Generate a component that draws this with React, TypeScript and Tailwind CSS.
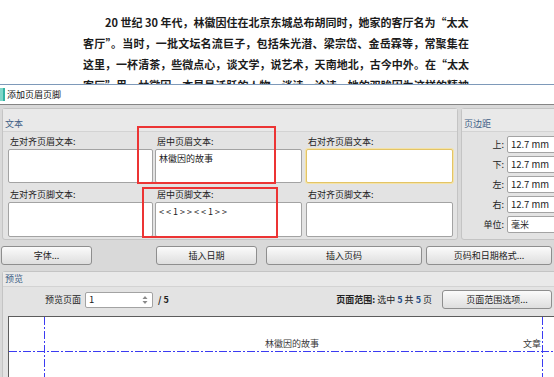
import { ReactNode } from "react";

const docLines = [
  { text: "20 世纪 30 年代，林徽因住在北京东城总布胡同时，她家的客厅名为“太太", indent: true },
  { text: "客厅”。当时，一批文坛名流巨子，包括朱光潜、梁宗岱、金岳霖等，常聚集在", indent: false },
  { text: "这里，一杯清茶，些微点心，谈文学，说艺术，天南地北，古今中外。在“太太", indent: false },
  { text: "客厅”里，林徽因，本是最活跃的人物，谈诗、论诗，她的双眸因为这样的精神", indent: false },
];

const margins = ["上:", "下:", "左:", "右:"];

function GroupHeader({ title, tall = true }: { title: string; tall?: boolean }) {
  return (
    <div
      className={
        tall
          ? "h-[23px] border-b border-[#d3d3d3] bg-[#e9e9e9] px-[2px] pt-[9px] text-[9px] leading-[12px] text-[#3f5f86]"
          : "h-[15px] border-b border-[#d3d3d3] bg-[#e9e9e9] px-[2px] pt-[1px] text-[9px] leading-[12px] text-[#3f5f86]"
      }
    >
      {title}
    </div>
  );
}

function Field({ children, focus = false, h }: { children?: ReactNode; focus?: boolean; h: string }) {
  return (
    <div
      className={`${h} rounded-[2px] border bg-white px-[3px] pt-[3px] text-[9px] leading-[12px] text-[#222] ${
        focus ? "border-[#e3c466] shadow-[0_0_0_1px_#f3e2a8]" : "border-[#a3a3a3]"
      }`}
    >
      {children}
    </div>
  );
}

function Btn({ children, className }: { children: ReactNode; className: string }) {
  return (
    <div
      className={`flex h-[19px] shrink-0 items-center justify-center rounded-[3px] border border-[#8e8e8e] bg-gradient-to-b from-[#fbfbfb] to-[#dedede] text-[9px] text-[#222] ${className}`}
    >
      {children}
    </div>
  );
}

function TextCol({
  className,
  top,
  bottom,
  focusTop = false,
  topText,
  bottomText,
}: {
  className: string;
  top: string;
  bottom: string;
  focusTop?: boolean;
  topText?: ReactNode;
  bottomText?: ReactNode;
}) {
  return (
    <div className={`shrink-0 ${className}`}>
      <div className="mt-[4px] h-[12px] pl-[2px] text-[9px] leading-[12px] text-[#222]">{top}</div>
      <div className="mt-[1px]">
        <Field h="h-[34px]" focus={focusTop}>
          {topText}
        </Field>
      </div>
      <div className="mt-[6px] h-[12px] pl-[2px] text-[9px] leading-[12px] text-[#222]">{bottom}</div>
      <div className="mt-[1px]">
        <Field h="h-[35px]">{bottomText}</Field>
      </div>
    </div>
  );
}

export default function App() {
  return (
    <div className="relative h-[377px] w-[554px] overflow-hidden bg-white font-['Noto_Sans_CJK_SC',sans-serif]">
      {/* document behind the dialog */}
      <div className="h-[84px] overflow-hidden pt-[12px] pl-[83px]">
        {docLines.map((l) => (
          <div
            key={l.text}
            className={`h-[21px] whitespace-nowrap text-justify text-[11px] leading-[21px] font-semibold text-[#1c1c1c] [text-align-last:justify] ${
              l.indent ? "ml-[22px] w-[363px]" : "w-[386px]"
            }`}
          >
            {l.text}
          </div>
        ))}
      </div>

      {/* title bar */}
      <div className="flex h-[21px] items-center border-t border-b border-t-[#7e99b9] border-b-[#858585] bg-white">
        <div className="h-[13px] w-[5px] border-r-2 border-[#35b2a2] bg-[#7fd6c8]" />
        <span className="ml-[2px] text-[9px] text-[#111]">添加页眉页脚</span>
      </div>

      {/* dialog body */}
      <div className="h-[300px] bg-[#d9d9d9] pt-[3px]">
        <div className="flex pl-[2px]">
          <div className="w-[456px] shrink-0 rounded-[3px] border border-[#c4c4c4] bg-[#e3e3e3] pb-[2px]">
            <GroupHeader title="文本" />
            <div className="flex pl-[5px]">
              <TextCol className="w-[145px]" top="左对齐页眉文本:" bottom="左对齐页脚文本:" />
              <TextCol
                className="ml-[2px] w-[147px]"
                top="居中页眉文本:"
                bottom="居中页脚文本:"
                topText="林徽因的故事"
                bottomText={<span className="tracking-[2px]">{"<<1>><<1>>"}</span>}
              />
              <TextCol
                className="ml-[4px] w-[147px]"
                top="右对齐页眉文本:"
                bottom="右对齐页脚文本:"
                focusTop
              />
            </div>
          </div>
          <div className="ml-[3px] w-[100px] shrink-0 rounded-[3px] border border-[#c4c4c4] bg-[#e3e3e3]">
            <GroupHeader title="页边距" />
            <div className="mt-[4px] flex flex-col gap-[3px]">
              {margins.map((m) => (
                <div key={m} className="flex h-[17px] items-center">
                  <span className="w-[48px] text-right text-[9px] text-[#222]">{m}</span>
                  <div className="ml-[3px] flex h-[17px] w-[60px] items-center rounded-[2px] border border-[#a3a3a3] bg-white pl-[3px] text-[9.5px] whitespace-nowrap text-[#222]">
                    12.7 mm
                  </div>
                </div>
              ))}
              <div className="flex h-[17px] items-center">
                <span className="w-[48px] text-right text-[9px] text-[#222]">单位:</span>
                <div className="ml-[3px] flex h-[17px] w-[60px] items-center rounded-[2px] border border-[#a3a3a3] bg-white pl-[3px] text-[9px] text-[#222]">
                  毫米
                </div>
              </div>
            </div>
          </div>
        </div>

        {/* button row */}
        <div className="mt-[6px] flex">
          <Btn className="ml-[1px] w-[91px]">字体...</Btn>
          <Btn className="ml-[64px] w-[101px]">插入日期</Btn>
          <Btn className="ml-[9px] w-[156px]">插入页码</Btn>
          <Btn className="ml-[4px] w-[126px]">页码和日期格式...</Btn>
        </div>

        {/* preview group */}
        <div className="mt-[6px] ml-[2px] w-[560px] rounded-[3px] border border-[#c4c4c4] bg-[#e3e3e3]">
          <GroupHeader title="预览" tall={false} />
          <div className="mt-[3px] flex h-[19px] w-[552px] items-center text-[9px] text-[#222]">
            <span className="ml-[42px]">预览页面</span>
            <div className="ml-[4px] flex h-[16px] w-[68px] items-center justify-between rounded-[2px] border border-[#a3a3a3] bg-white pr-[4px] pl-[3px]">
              <span className="text-[9.5px]">1</span>
              <svg width="6" height="10" viewBox="0 0 6 10">
                <path d="M0.5 4 L3 1 L5.5 4 Z" fill="#8a8a8a" />
                <path d="M0.5 6 L3 9 L5.5 6 Z" fill="#8a8a8a" />
              </svg>
            </div>
            <span className="ml-[5px] font-bold">/ 5</span>
            <span className="mr-[10px] ml-auto">
              <span className="font-bold">页面范围:</span> 选中 <span className="font-bold text-[#1f4f8f]">5</span> 共{" "}
              <span className="font-bold text-[#1f4f8f]">5</span> 页
            </span>
            <Btn className="mr-[3px] w-[110px]">页面范围选项...</Btn>
          </div>

          {/* page preview */}
          <div className="relative mt-[7px] ml-[5px] h-[70px] border-t border-l border-[#5c5c5c] bg-white">
            <svg className="absolute top-0 left-0" width="560" height="70">
              <line x1="35.5" y1="0" x2="35.5" y2="70" stroke="#3b3bf2" strokeWidth="1" strokeDasharray="8 2 2 2" />
              <line x1="533.5" y1="0" x2="533.5" y2="70" stroke="#3b3bf2" strokeWidth="1" strokeDasharray="8 2 2 2" />
              <line x1="0" y1="34.5" x2="560" y2="34.5" stroke="#3b3bf2" strokeWidth="1" strokeDasharray="8 2 2 2" />
            </svg>
            <span className="absolute top-[21px] left-[256px] text-[9px] leading-[12px] text-[#3a3a3a]">林徽因的故事</span>
            <span className="absolute top-[21px] left-[514px] text-[9px] leading-[12px] text-[#3a3a3a]">文章</span>
          </div>
        </div>
      </div>

      {/* red annotation boxes */}
      <div className="absolute top-[126px] left-[137px] h-[58px] w-[139px] border-2 border-[#ec3434]" />
      <div className="absolute top-[187px] left-[142px] h-[51px] w-[136px] border-2 border-[#ec3434]" />
    </div>
  );
}
